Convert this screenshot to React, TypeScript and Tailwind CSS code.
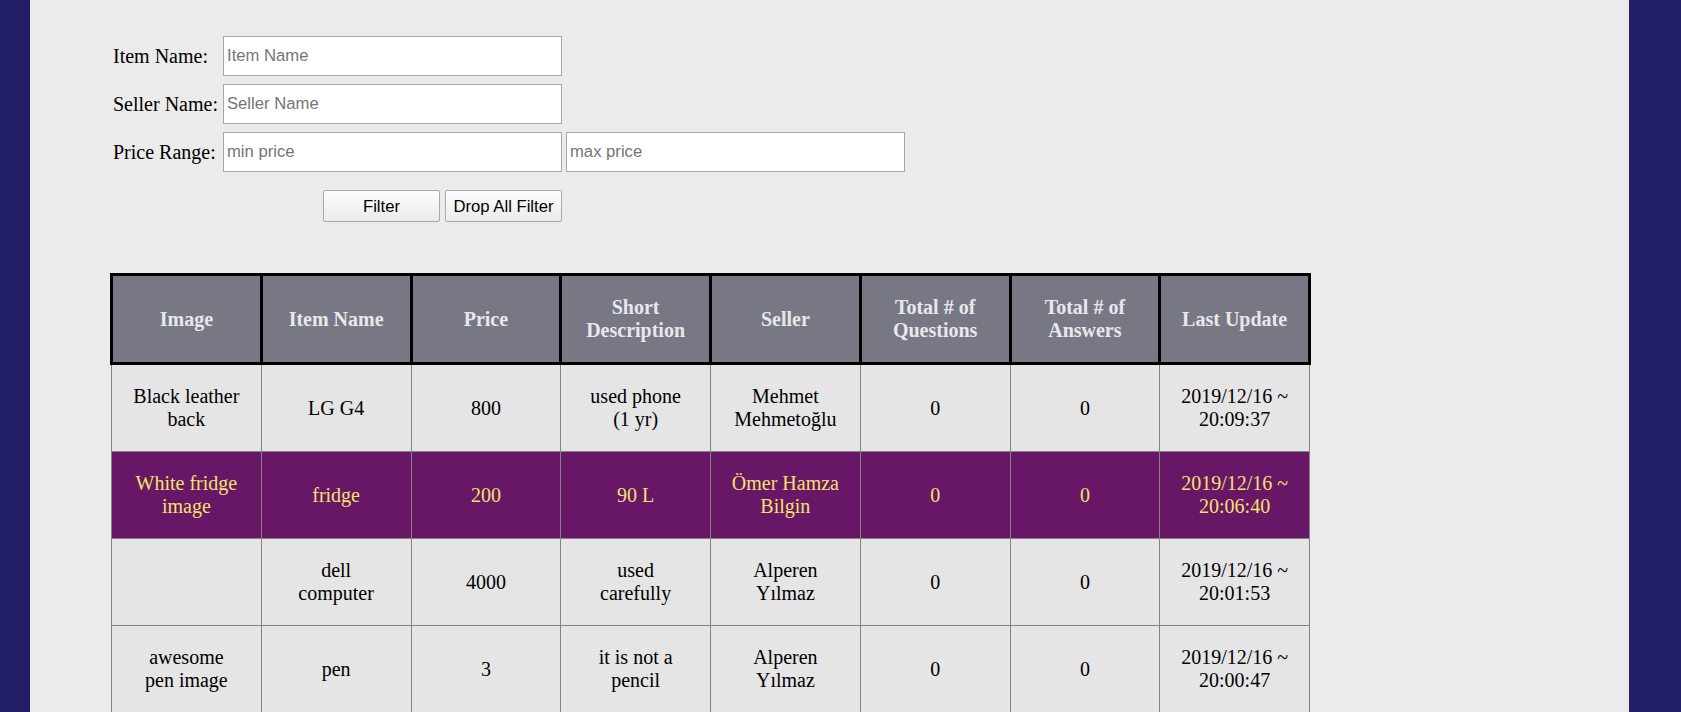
import React from "react";

type Row = { cells: string[][]; active?: boolean };

const headers: string[][] = [
    ["Image"],
    ["Item Name"],
    ["Price"],
    ["Short", "Description"],
    ["Seller"],
    ["Total # of", "Questions"],
    ["Total # of", "Answers"],
    ["Last Update"],
];

const rows: Row[] = [
    {
        cells: [
            ["Black leather", "back"],
            ["LG G4"],
            ["800"],
            ["used phone", "(1 yr)"],
            ["Mehmet", "Mehmetoğlu"],
            ["0"],
            ["0"],
            ["2019/12/16 ~", "20:09:37"],
        ],
    },
    {
        active: true,
        cells: [
            ["White fridge", "image"],
            ["fridge"],
            ["200"],
            ["90 L"],
            ["Ömer Hamza", "Bilgin"],
            ["0"],
            ["0"],
            ["2019/12/16 ~", "20:06:40"],
        ],
    },
    {
        cells: [
            [],
            ["dell", "computer"],
            ["4000"],
            ["used", "carefully"],
            ["Alperen", "Yılmaz"],
            ["0"],
            ["0"],
            ["2019/12/16 ~", "20:01:53"],
        ],
    },
    {
        cells: [
            ["awesome", "pen image"],
            ["pen"],
            ["3"],
            ["it is not a", "pencil"],
            ["Alperen", "Yılmaz"],
            ["0"],
            ["0"],
            ["2019/12/16 ~", "20:00:47"],
        ],
    },
];

function Lines({ lines }: { lines: string[] }) {
    return (
        <>
            {lines.map((l, i) => (
                <div key={i} className="whitespace-nowrap">
                    {l}
                </div>
            ))}
        </>
    );
}

function Field({ label, children }: { label: string; children: React.ReactNode }) {
    return (
        <div className="flex items-center h-[40px]">
            <label className="w-[110px] text-[20px] text-black whitespace-nowrap">{label}</label>
            {children}
        </div>
    );
}

const inputClass =
    "h-[40px] w-[339px] bg-white border border-[#a6a6a6] px-[3px] text-[16.67px] font-['Liberation_Sans',Arial,sans-serif] text-black placeholder:text-[#757575] outline-none";

const buttonClass =
    "h-[32px] w-[117px] border border-[#a9a9a9] rounded-[2px] bg-gradient-to-b from-[#fdfdfd] to-[#ebebeb] text-[16.67px] font-['Liberation_Sans',Arial,sans-serif] text-black";

export default function App() {
    return (
        <div className="min-h-screen bg-[#221f66] flex font-['Liberation_Serif','Times_New_Roman',serif]">
            <main className="ml-[30px] w-[1599px] min-h-screen bg-[#ebebeb] pt-[36px] pl-[80px] pb-10">
                <form className="flex flex-col gap-[8px] pl-[3px]" onSubmit={(e) => e.preventDefault()}>
                    <Field label="Item Name:">
                        <input className={inputClass} placeholder="Item Name" />
                    </Field>
                    <Field label="Seller Name:">
                        <input className={inputClass} placeholder="Seller Name" />
                    </Field>
                    <Field label="Price Range:">
                        <div className="flex gap-[4px]">
                            <input className={inputClass} placeholder="min price" />
                            <input className={inputClass} placeholder="max price" />
                        </div>
                    </Field>
                    <div className="flex gap-[5px] mt-[10px] pl-[210px]">
                        <button className={buttonClass}>Filter</button>
                        <button className={buttonClass}>Drop All Filter</button>
                    </div>
                </form>

                <table className="mt-[51px] w-[1201px] table-fixed border-collapse text-[20px] leading-[23px] text-center">
                    <thead>
                        <tr>
                            {headers.map((h, i) => (
                                <th
                                    key={i}
                                    className="border-[3px] border-black bg-[#787885] text-[#e8e8ec] font-bold p-[20px]"
                                >
                                    <Lines lines={h} />
                                </th>
                            ))}
                        </tr>
                    </thead>
                    <tbody>
                        {rows.map((r, i) => (
                            <tr
                                key={i}
                                className={r.active ? "bg-[#681767] text-[#f3e26c]" : "bg-[#e5e5e5] text-black"}
                            >
                                {r.cells.map((c, j) => (
                                    <td key={j} className="border border-[#838383] p-[20px] h-[86px]">
                                        <Lines lines={c} />
                                    </td>
                                ))}
                            </tr>
                        ))}
                    </tbody>
                </table>
            </main>
        </div>
    );
}
